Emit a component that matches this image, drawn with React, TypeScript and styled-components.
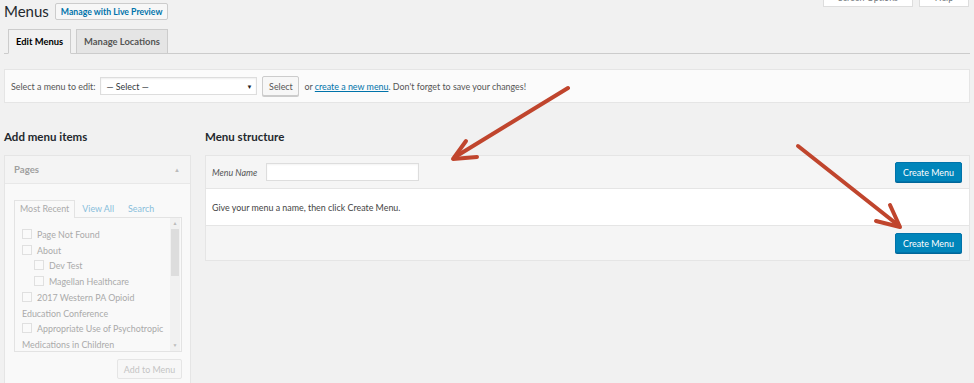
import React from 'react';
import styled, { createGlobalStyle } from 'styled-components';

const Global = createGlobalStyle`
  html, body { margin: 0; padding: 0; background: #f1f1f1; }
  body {
    font-family: Lato, "Open Sans", sans-serif;
    font-size: 8.9px;
    color: #444;
    overflow: hidden;
  }
  * { box-sizing: border-box; }
`;

const Page = styled.div`
  position: relative;
  width: 974px;
  height: 383px;
  overflow: hidden;
  padding: 0 4px;
`;

const TitleRow = styled.div`
  display: flex;
  align-items: flex-start;
  height: 24px;
`;

const Title = styled.h1`
  margin: 1px 6px 0 0;
  font-size: 15px;
  line-height: 21px;
  font-weight: 400;
  color: #23282d;
`;

const PreviewButton = styled.button`
  margin-top: 3px;
  height: 17px;
  padding: 0 5px;
  border: 1px solid #ccc;
  background: #f7f7f7;
  color: #0073aa;
  font-family: inherit;
  font-size: 8.7px;
  font-weight: 700;
  line-height: 15px;
  border-radius: 2px;
`;

const ScreenLinks = styled.div`
  margin-left: auto;
  margin-right: 1px;
  margin-top: -14px;
  display: flex;
  gap: 6px;
`;

const ScreenTab = styled.div<{ $w: number }>`
  width: ${(p) => p.$w}px;
  height: 21px;
  background: #fff;
  border: 1px solid #ddd;
  border-top: none;
  color: #72777c;
  text-align: center;
  line-height: 23px;
`;

const NavTabs = styled.div`
  margin-top: 5px;
  display: flex;
  gap: 5px;
  padding-left: 4px;
  height: 25px;
  border-bottom: 1px solid #ccc;
`;

const NavTab = styled.div<{ $active?: boolean }>`
  height: 25px;
  padding: 0 7px;
  border: 1px solid #ccc;
  border-bottom-color: ${(p) => (p.$active ? '#f1f1f1' : '#ccc')};
  background: ${(p) => (p.$active ? '#f1f1f1' : '#e5e5e5')};
  color: ${(p) => (p.$active ? '#000' : '#555')};
  font-size: 9.4px;
  font-weight: 700;
  line-height: 23px;
`;

const SelectBar = styled.div`
  margin-top: 15px;
  height: 34px;
  background: #fbfbfb;
  border: 1px solid #e5e5e5;
  display: flex;
  align-items: center;
  padding: 0 6px;
  color: #555;
`;

const SelectBox = styled.div`
  margin-left: 5px;
  width: 157px;
  height: 18px;
  border: 1px solid #ddd;
  background: #fff;
  box-shadow: inset 0 1px 2px rgba(0, 0, 0, 0.07);
  display: flex;
  align-items: center;
  justify-content: space-between;
  padding: 0 4px 0 5px;
  color: #32373c;
`;

const Caret = styled.span`
  font-size: 6px;
  color: #222;
`;

const GreyButton = styled.button`
  margin-left: 5px;
  height: 20px;
  width: 37px;
  padding: 0;
  background: #f7f7f7;
  border: 1px solid #ccc;
  border-radius: 2px;
  box-shadow: 0 1px 0 #ccc;
  color: #555;
  font-family: inherit;
  font-size: 8.9px;
`;

const BarText = styled.span`
  margin-left: 5px;
`;

const Link = styled.a`
  color: #0073aa;
  text-decoration: underline;
`;

const Columns = styled.div`
  margin-top: 26px;
  display: flex;
  gap: 14px;
  align-items: flex-start;
`;

const LeftCol = styled.div`
  width: 187px;
  flex: none;
`;

const RightCol = styled.div`
  flex: 1;
`;

const Heading = styled.h2`
  margin: 0 0 10px;
  font-size: 11.5px;
  line-height: 16px;
  font-weight: 700;
  color: #23282d;
`;

const Panel = styled.div`
  border: 1px solid #e5e5e5;
  background: #f9f9f9;
  height: 240px;
`;

const PanelHeader = styled.div`
  height: 28px;
  padding: 0 9px;
  display: flex;
  align-items: center;
  justify-content: space-between;
  background: #f4f4f4;
  border-bottom: 1px solid #e8e8e8;
  color: #a0a0a0;
  font-size: 9.6px;
  font-weight: 700;
`;

const UpArrow = styled.span`
  font-size: 6px;
  color: #bbb;
  margin-right: 1px;
`;

const PanelBody = styled.div`
  padding: 16px 8px 0 9px;
`;

const InnerTabs = styled.div`
  display: flex;
  height: 17px;
  align-items: flex-end;
`;

const InnerTab = styled.div<{ $active?: boolean }>`
  height: 18px;
  margin-bottom: -1px;
  padding: 0 ${(p) => (p.$active ? 5 : 6)}px;
  line-height: 16px;
  color: ${(p) => (p.$active ? '#aaa' : '#88bedb')};
  background: ${(p) => (p.$active ? '#f9f9f9' : 'transparent')};
  border: 1px solid ${(p) => (p.$active ? '#e3e3e3' : 'transparent')};
  border-bottom: none;
  position: relative;
  z-index: 1;
`;

const ListBox = styled.div`
  height: 135px;
  border: 1px solid #e3e3e3;
  display: flex;
  overflow: hidden;
`;

const ListContent = styled.div`
  flex: 1;
  padding: 9px 0 0 7px;
  color: #aaa;
  line-height: 15.7px;
`;

const Item = styled.div<{ $indent?: boolean }>`
  padding-left: ${(p) => (p.$indent ? 12 : 0)}px;
`;

const Check = styled.span`
  display: inline-block;
  width: 10px;
  height: 10px;
  margin-right: 5px;
  vertical-align: -1px;
  border: 1px solid #e0e0e0;
  background: #fafafa;
`;

const Scrollbar = styled.div`
  width: 10px;
  margin: 0 1px 0 0;
  background: #f1f1f1;
  display: flex;
  flex-direction: column;
  align-items: center;
  color: #bbb;
  font-size: 5px;
`;

const ScrollArrow = styled.div`
  height: 11px;
  line-height: 11px;
`;

const Thumb = styled.div`
  width: 8px;
  height: 47px;
  background: #ddd;
`;

const ScrollFill = styled.div`
  flex: 1;
`;

const PanelActions = styled.div`
  display: flex;
  justify-content: flex-end;
  margin-top: 7px;
`;

const FadedButton = styled.button`
  width: 65px;
  height: 20px;
  background: #f7f7f7;
  border: 1px solid #e5e5e5;
  border-radius: 2px;
  color: #c4c4c4;
  font-family: inherit;
  font-size: 8.9px;
  padding: 0;
`;

const MenuBox = styled.div`
  border: 1px solid #e5e5e5;
`;

const MenuBar = styled.div<{ $top?: boolean }>`
  height: ${(p) => (p.$top ? 33 : 35)}px;
  background: #f5f5f5;
  display: flex;
  align-items: center;
  padding: 0 7px 0 6px;
  border-top: ${(p) => (p.$top ? 'none' : '1px solid #e5e5e5')};
  border-bottom: ${(p) => (p.$top ? '1px solid #e5e5e5' : 'none')};
`;

const NameLabel = styled.span`
  font-style: italic;
  color: #555;
  width: 54px;
`;

const NameInput = styled.div`
  width: 153px;
  height: 18px;
  background: #fff;
  border: 1px solid #ddd;
  box-shadow: inset 0 1px 2px rgba(0, 0, 0, 0.05);
`;

const PrimaryButton = styled.button`
  margin-left: auto;
  width: 67px;
  height: 20px;
  padding: 0;
  background: #0085ba;
  border: 1px solid #0073aa;
  border-radius: 2px;
  box-shadow: 0 1px 0 #006799;
  color: #fff;
  font-family: inherit;
  font-size: 8.9px;
`;

const MenuBody = styled.div`
  height: 36px;
  background: #fff;
  display: flex;
  align-items: center;
  padding: 0 6px;
  color: #444;
`;

const Overlay = styled.svg`
  position: absolute;
  left: 0;
  top: 0;
  pointer-events: none;
`;

const pages: { label: string; indent?: boolean }[] = [
  { label: 'Page Not Found' },
  { label: 'About' },
  { label: 'Dev Test', indent: true },
  { label: 'Magellan Healthcare', indent: true },
  { label: '2017 Western PA Opioid Education Conference' },
  { label: 'Appropriate Use of Psychotropic Medications in Children' },
];

export default function App() {
  return (
    <Page>
      <Global />
      <TitleRow>
        <Title>Menus</Title>
        <PreviewButton>Manage with Live Preview</PreviewButton>
        <ScreenLinks>
          <ScreenTab $w={90}>Screen Options</ScreenTab>
          <ScreenTab $w={50}>Help</ScreenTab>
        </ScreenLinks>
      </TitleRow>

      <NavTabs>
        <NavTab $active>Edit Menus</NavTab>
        <NavTab>Manage Locations</NavTab>
      </NavTabs>

      <SelectBar>
        <span>Select a menu to edit:</span>
        <SelectBox>
          <span>— Select —</span>
          <Caret>▼</Caret>
        </SelectBox>
        <GreyButton>Select</GreyButton>
        <BarText>
          or <Link>create a new menu</Link>. Don't forget to save your changes!
        </BarText>
      </SelectBar>

      <Columns>
        <LeftCol>
          <Heading>Add menu items</Heading>
          <Panel>
            <PanelHeader>
              <span>Pages</span>
              <UpArrow>▲</UpArrow>
            </PanelHeader>
            <PanelBody>
              <InnerTabs>
                <InnerTab $active>Most Recent</InnerTab>
                <InnerTab>View All</InnerTab>
                <InnerTab>Search</InnerTab>
              </InnerTabs>
              <ListBox>
                <ListContent>
                  {pages.map((p) => (
                    <Item key={p.label} $indent={p.indent}>
                      <Check />
                      {p.label}
                    </Item>
                  ))}
                </ListContent>
                <Scrollbar>
                  <ScrollArrow>▲</ScrollArrow>
                  <Thumb />
                  <ScrollFill />
                  <ScrollArrow>▼</ScrollArrow>
                </Scrollbar>
              </ListBox>
              <PanelActions>
                <FadedButton>Add to Menu</FadedButton>
              </PanelActions>
            </PanelBody>
          </Panel>
        </LeftCol>

        <RightCol>
          <Heading>Menu structure</Heading>
          <MenuBox>
            <MenuBar $top>
              <NameLabel>Menu Name</NameLabel>
              <NameInput />
              <PrimaryButton>Create Menu</PrimaryButton>
            </MenuBar>
            <MenuBody>Give your menu a name, then click Create Menu.</MenuBody>
            <MenuBar>
              <PrimaryButton>Create Menu</PrimaryButton>
            </MenuBar>
          </MenuBox>
        </RightCol>
      </Columns>

      <Overlay width="974" height="383" viewBox="0 0 974 383">
        <g stroke="#c0452d" strokeWidth="4" strokeLinecap="round" strokeLinejoin="round" fill="none">
          <line x1="568" y1="88" x2="455" y2="157" />
          <polyline points="466,141 453,159 477,157" />
          <line x1="798" y1="146" x2="898" y2="225" />
          <polyline points="876,221 900,227 890,205" />
        </g>
      </Overlay>
    </Page>
  );
}
